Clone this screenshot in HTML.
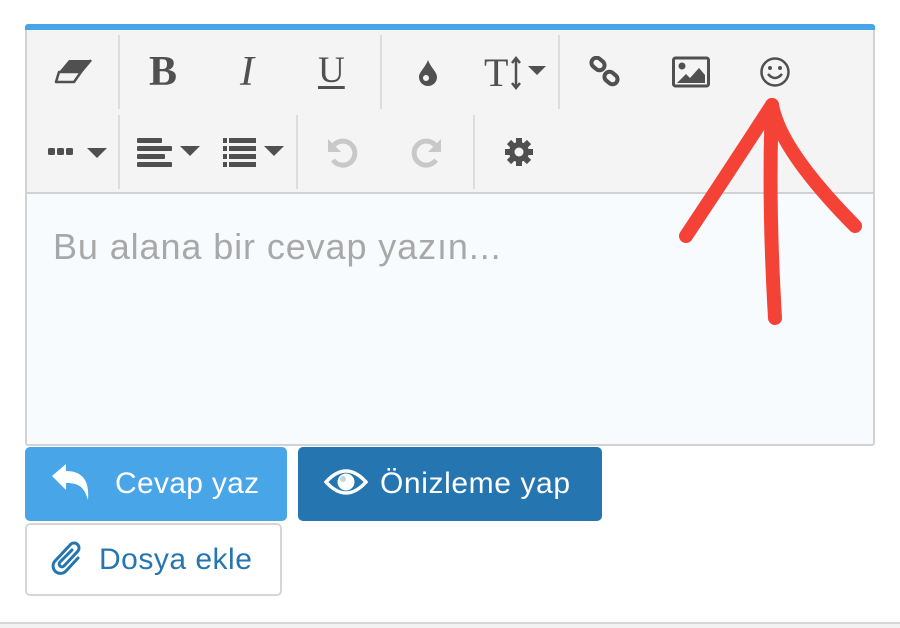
<!DOCTYPE html><html><head><style>
body{margin:0;width:900px;height:628px;background:#fff;position:relative;overflow:hidden;font-family:"Liberation Sans",sans-serif}
.a{position:absolute}
.sep{position:absolute;width:2px;background:#ddd}
.ic{position:absolute;color:#505050}
.btn{position:absolute;border-radius:5px;box-sizing:border-box;font-size:30px;display:flex;align-items:center}
</style></head><body>
<div class="a" style="left:25px;top:24px;width:850px;height:422px;border:2px solid #d2d2d2;border-top:none;border-radius:3px;box-sizing:border-box;background:#f7fbfe"></div>
<div class="a" style="left:25px;top:24px;width:850px;height:6px;background:#48a6e8;border-radius:3px 3px 0 0"></div>
<div class="a" style="left:27px;top:30px;width:846px;height:162px;background:#f4f4f4;border-bottom:2px solid #d2d2d2"></div>
<div class="sep" style="left:118px;top:35px;height:74px"></div>
<div class="sep" style="left:380px;top:35px;height:74px"></div>
<div class="sep" style="left:558px;top:35px;height:74px"></div>
<div class="sep" style="left:118px;top:115px;height:74px"></div>
<div class="sep" style="left:296px;top:115px;height:74px"></div>
<div class="sep" style="left:473px;top:115px;height:74px"></div>
<svg class="a" style="left:54px;top:58px" width="40" height="28" viewBox="0 0 40 28"><path d="M15 2H37L27 14H5Z" fill="#505050"/><path d="M5 14H27L20 24H2Z" fill="none" stroke="#505050" stroke-width="2.5" stroke-linejoin="round"/><path d="M27 14L37 2" stroke="#505050" stroke-width="2.5"/></svg>
<div class="ic" style="left:149px;top:48px;font:bold 42px 'Liberation Serif',serif">B</div>
<div class="ic" style="left:240px;top:48px;font:italic 42px 'Liberation Serif',serif">I</div>
<div class="ic" style="left:318px;top:49px;font:37px 'Liberation Serif',serif;text-decoration:underline;text-underline-offset:4px">U</div>
<svg class="a" style="left:417px;top:58px" width="22" height="28" viewBox="0 0 22 28"><path d="M11 2C14 10 20 14 20 19A9 9 0 0 1 2 19C2 14 8 10 11 2Z" fill="#505050"/><circle cx="9" cy="20" r="3" fill="#f4f4f4"/></svg>
<div class="ic" style="left:484px;top:49px;font:40px 'Liberation Serif',serif">T</div>
<svg class="a" style="left:510px;top:56px" width="42" height="34" viewBox="0 0 42 34"><path d="M6 2V32M2 7L6 2L10 7M2 27L6 32L10 27" stroke="#505050" stroke-width="2.5" fill="none"/><path d="M18 10H36L27 19Z" fill="#505050"/></svg>
<svg class="a" style="left:588px;top:56px" width="34" height="32" viewBox="0 0 34 32"><g fill="none" stroke="#505050" stroke-width="4"><rect x="3" y="3" width="14" height="10" rx="5" transform="rotate(40 10 8)"/><rect x="16" y="17" width="14" height="10" rx="5" transform="rotate(40 23 22)"/></g></svg>
<svg class="a" style="left:672px;top:56px" width="38" height="32" viewBox="0 0 38 32"><rect x="1.5" y="2" width="35" height="28" rx="2" fill="none" stroke="#505050" stroke-width="3"/><circle cx="10" cy="10" r="3.5" fill="#505050"/><path d="M5 27L14 18L18 22L27 12L33 19V27Z" fill="#505050"/></svg>
<svg class="a" style="left:759px;top:56px" width="32" height="32" viewBox="0 0 32 32"><circle cx="16" cy="16" r="13.5" fill="none" stroke="#505050" stroke-width="2.5"/><circle cx="11" cy="12" r="2" fill="#505050"/><circle cx="21" cy="12" r="2" fill="#505050"/><path d="M9 18Q16 26 23 18" fill="none" stroke="#505050" stroke-width="2.5"/></svg>
<svg class="a" style="left:46px;top:140px" width="64" height="24" viewBox="0 0 64 24"><rect x="2" y="8" width="7" height="7" rx="1.5" fill="#505050"/><rect x="11" y="8" width="7" height="7" rx="1.5" fill="#505050"/><rect x="20" y="8" width="7" height="7" rx="1.5" fill="#505050"/><path d="M41 8H61L51 18Z" fill="#505050"/></svg>
<svg class="a" style="left:135px;top:135px" width="68" height="34" viewBox="0 0 68 34"><g fill="#505050"><rect x="2" y="3" width="25" height="5" rx="1"/><rect x="2" y="11" width="35" height="5" rx="1"/><rect x="2" y="19" width="28" height="5" rx="1"/><rect x="2" y="27" width="35" height="5" rx="1"/><path d="M45 11H65L55 21Z"/></g></svg>
<svg class="a" style="left:221px;top:135px" width="66" height="34" viewBox="0 0 66 34"><g fill="#505050"><rect x="2" y="3" width="4" height="5"/><rect x="8" y="3" width="27" height="5"/><rect x="2" y="11" width="4" height="5"/><rect x="8" y="11" width="27" height="5"/><rect x="2" y="19" width="4" height="5"/><rect x="8" y="19" width="27" height="5"/><rect x="2" y="27" width="4" height="5"/><rect x="8" y="27" width="27" height="5"/><path d="M43 11H63L53 21Z"/></g></svg>
<svg class="a" style="left:325px;top:136px" width="34" height="32" viewBox="0 0 34 32"><path d="M9 9A12 12 0 1 1 8 24" fill="none" stroke="#c8c8c8" stroke-width="5"/><path d="M3 3V16H16Z" fill="#c8c8c8"/></svg>
<svg class="a" style="left:410px;top:136px" width="34" height="32" viewBox="0 0 34 32"><path d="M25 9A12 12 0 1 0 26 24" fill="none" stroke="#c8c8c8" stroke-width="5"/><path d="M31 3V16H18Z" fill="#c8c8c8"/></svg>
<svg class="a" style="left:503px;top:136px" width="32" height="32" viewBox="0 0 32 32"><g fill="#505050"><circle cx="16" cy="16" r="10"/><g stroke="#505050" stroke-width="6"><path d="M16 2V30M2 16H30M6 6L26 26M26 6L6 26"/></g></g><circle cx="16" cy="16" r="4.5" fill="#f4f4f4"/></svg>
<div class="a" style="left:53px;top:226px;font-size:36px;letter-spacing:0.9px;color:#a8a8a8">Bu alana bir cevap yazın...</div>
<div class="btn" style="left:25px;top:447px;width:262px;height:74px;background:#48a6e8;color:#fff;padding-left:90px;letter-spacing:0.3px">Cevap yaz</div>
<svg class="a" style="left:50px;top:462px" width="44" height="40" viewBox="0 0 44 40"><path d="M2 14L16 2V9C30 9 40 16 38 38C34 24 28 21 16 21V28Z" fill="#fff"/></svg>
<div class="btn" style="left:298px;top:447px;width:304px;height:74px;background:#2576b0;color:#fff;padding-left:82px;letter-spacing:0.6px">Önizleme yap</div>
<svg class="a" style="left:324px;top:466px" width="44" height="32" viewBox="0 0 44 32"><path d="M2 16Q22 -6 42 16Q22 38 2 16Z" fill="none" stroke="#fff" stroke-width="3.5"/><circle cx="22" cy="16" r="8.5" fill="#fff"/><circle cx="19" cy="13" r="3" fill="#2576b0" opacity=".3"/></svg>
<div class="btn" style="left:25px;top:523px;width:257px;height:73px;background:#fff;border:2px solid #d6d6d6;color:#2576b0;padding-left:72px;letter-spacing:0.5px">Dosya ekle</div>
<svg class="a" style="left:50px;top:538px" width="36" height="40" viewBox="0 0 36 40"><path d="M28 20L16 33A7 7 0 0 1 5 23L21 6A5 5 0 0 1 28 13L14 28A2.5 2.5 0 0 1 10 24L22 12" fill="none" stroke="#2576b0" stroke-width="3" stroke-linecap="round"/></svg>
<div class="a" style="left:0;top:622px;width:900px;height:2px;background:#d6d6d6"></div>
<div class="a" style="left:0;top:624px;width:900px;height:4px;background:#f2f2f2"></div>
<svg class="a" style="left:0;top:0" width="900" height="628"><g fill="none" stroke="#f44336" stroke-width="14" stroke-linecap="round" stroke-linejoin="round"><path d="M772 105Q768 200 775 318"/><path d="M772 105Q730 170 686 236"/><path d="M772 105Q780 150 855 226"/></g></svg>
</body></html>
